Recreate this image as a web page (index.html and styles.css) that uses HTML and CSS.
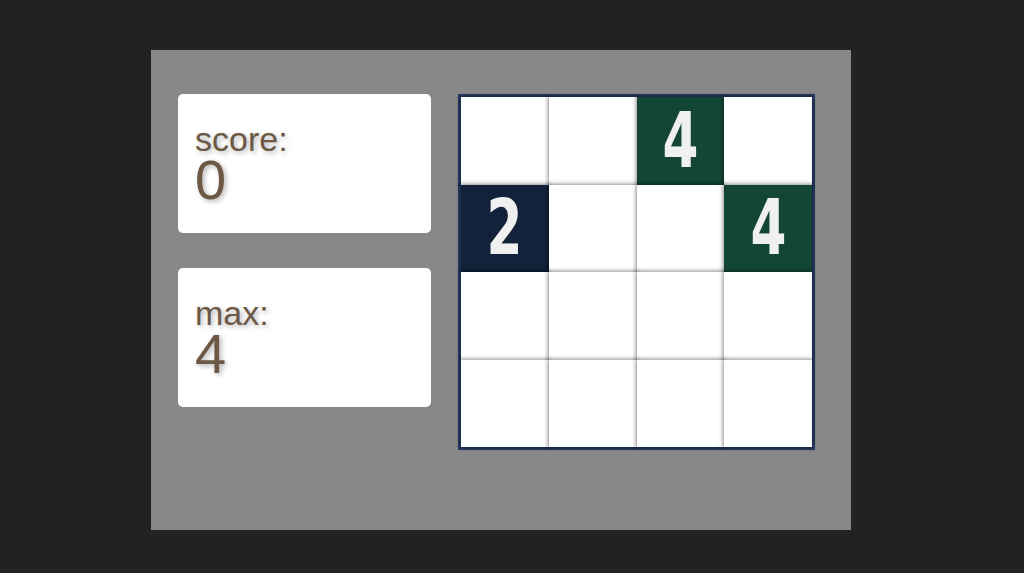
FILE: index.html
```html
<!DOCTYPE html>
<html lang="en">
<head>
  <meta charset="UTF-8">
  <title>2048</title>
  <link rel="stylesheet" href="styles.css">
</head>
<body>
  <div class="game">
    <div class="scores">
      <div class="score-card">
        <span class="label">score:</span>
        <span class="value">0</span>
      </div>
      <div class="score-card">
        <span class="label">max:</span>
        <span class="value">4</span>
      </div>
    </div>

    <div class="board">
      <div class="cell"></div>
      <div class="cell"></div>
      <div class="cell tile-4"><span>4</span></div>
      <div class="cell"></div>

      <div class="cell tile-2"><span>2</span></div>
      <div class="cell"></div>
      <div class="cell"></div>
      <div class="cell tile-4"><span>4</span></div>

      <div class="cell"></div>
      <div class="cell"></div>
      <div class="cell"></div>
      <div class="cell"></div>

      <div class="cell"></div>
      <div class="cell"></div>
      <div class="cell"></div>
      <div class="cell"></div>
    </div>
  </div>
</body>
</html>
```

FILE: styles.css
```css
:root {
  --bg: #222222;
  --panel: #888888;
  --text: #6b5845;
  --navy: #11223a;
  --green: #134734;
  --frame: #263c66;
}

* {
  box-sizing: border-box;
}

body {
  margin: 0;
  background: var(--bg);
  font-family: 'Liberation Sans', Arial, sans-serif;
  min-height: 100vh;
  padding: 50px 0 0 151px;
}

.game {
  width: 700px;
  height: 480px;
  background: var(--panel);
  display: flex;
  align-items: flex-start;
  gap: 27px;
  padding: 44px 27px;
}

.scores {
  display: flex;
  flex-direction: column;
  gap: 35px;
  width: 253px;
}

.score-card {
  background: #fff;
  border-radius: 5px;
  height: 139px;
  padding: 29px 17px;
  color: var(--text);
  text-shadow: 2px 2px 5px rgba(0, 0, 0, 0.3);
}

.score-card span {
  display: block;
}

.label {
  font-size: 34px;
  line-height: 32px;
}

.value {
  font-size: 56px;
  line-height: 50px;
}

.board {
  display: grid;
  grid-template-columns: repeat(4, 1fr);
  grid-template-rows: repeat(4, 1fr);
  width: 357px;
  height: 356px;
  border: 3px solid var(--frame);
  background: #fff;
}

.cell {
  background: #fff;
  box-shadow: 0 0 4px 1px rgba(0, 0, 0, 0.45);
  display: flex;
  align-items: center;
  justify-content: center;
  overflow: hidden;
}

.cell span {
  font-family: 'DejaVu Sans', sans-serif;
  font-weight: bold;
  font-size: 76px;
  line-height: 1;
  color: #f0f0f0;
  transform: scaleX(0.68);
}

.tile-2 {
  background: var(--navy);
}

.tile-4 {
  background: var(--green);
}
```
